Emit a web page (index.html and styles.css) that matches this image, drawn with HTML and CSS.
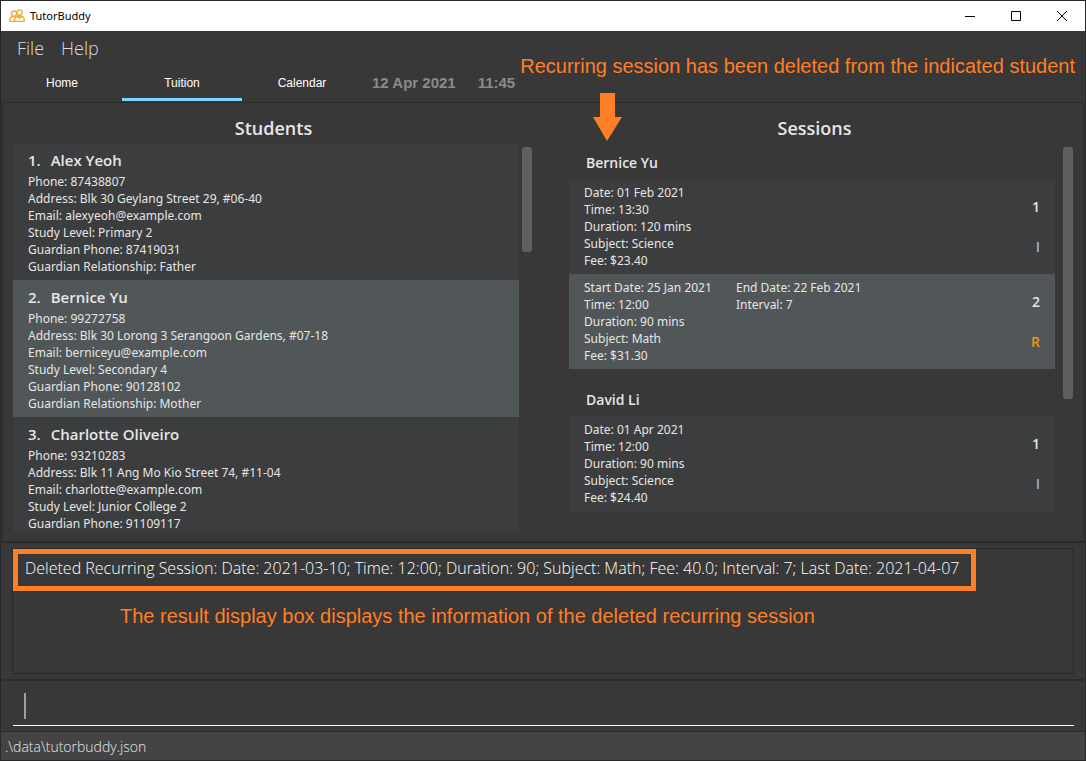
FILE: index.html
```html
<!DOCTYPE html>
<html lang="en">
<head>
<meta charset="utf-8">
<title>TutorBuddy</title>
<link rel="stylesheet" href="styles.css">
</head>
<body>
<div class="window">
  <header class="titlebar">
    <svg class="logo" width="16" height="14" viewBox="0 0 16 14" fill="none" stroke="#eeaa2c" stroke-width="1.3" aria-hidden="true">
      <circle cx="5" cy="4.6" r="2.6"/>
      <circle cx="10.5" cy="3.6" r="2.8"/>
      <path d="M6.2 12.3H1V10.4C1 8.6 2.4 7.6 4.6 7.4"/>
      <path d="M5.6 12.3V10.4C5.6 8.2 7.4 7 10.4 7S15.2 8.2 15.2 10.4V12.3Z"/>
      <path d="M8.2 7.4l2.2 2 2.2-2"/>
    </svg>
    <h1 class="app-name">TutorBuddy</h1>
    <div class="window-buttons">
      <button class="window-button" aria-label="Minimize"><svg width="10" height="11" viewBox="0 0 10 11" stroke="#000"><path d="M0 5.5h10"/></svg></button>
      <button class="window-button" aria-label="Maximize"><svg width="10" height="10" viewBox="0 0 10 10" stroke="#000" fill="none"><path d="M.5.5h9v9h-9z"/></svg></button>
      <button class="window-button" aria-label="Close"><svg width="10" height="10" viewBox="0 0 10 10" stroke="#000"><path d="M0 0l10 10M10 0L0 10"/></svg></button>
    </div>
  </header>

  <nav class="menubar">
    <button class="menu">File</button>
    <button class="menu">Help</button>
  </nav>

  <div class="tabs">
    <button class="tab">Home</button>
    <button class="tab tab-selected">Tuition</button>
    <button class="tab">Calendar</button>
    <span class="clock">12 Apr 2021</span>
    <span class="clock">11:45</span>
  </div>

  <main class="panes">
    <section class="pane">
      <h2 class="pane-title">Students</h2>
      <div class="scroller">
        <div class="list student-list">
          <article class="student">
            <h3 class="name"><span>1.</span><span>Alex Yeoh</span></h3>
            <p>Phone: 87438807</p>
            <p>Address: Blk 30 Geylang Street 29, #06-40</p>
            <p>Email: alexyeoh@example.com</p>
            <p>Study Level: Primary 2</p>
            <p>Guardian Phone: 87419031</p>
            <p>Guardian Relationship: Father</p>
          </article>
          <article class="student selected">
            <h3 class="name"><span>2.</span><span>Bernice Yu</span></h3>
            <p>Phone: 99272758</p>
            <p>Address: Blk 30 Lorong 3 Serangoon Gardens, #07-18</p>
            <p>Email: berniceyu@example.com</p>
            <p>Study Level: Secondary 4</p>
            <p>Guardian Phone: 90128102</p>
            <p>Guardian Relationship: Mother</p>
          </article>
          <article class="student">
            <h3 class="name"><span>3.</span><span>Charlotte Oliveiro</span></h3>
            <p>Phone: 93210283</p>
            <p>Address: Blk 11 Ang Mo Kio Street 74, #11-04</p>
            <p>Email: charlotte@example.com</p>
            <p>Study Level: Junior College 2</p>
            <p>Guardian Phone: 91109117</p>
          </article>
        </div>
        <div class="track"><div class="thumb thumb-students"></div></div>
      </div>
    </section>

    <section class="pane">
      <h2 class="pane-title">Sessions</h2>
      <div class="scroller">
        <div class="list session-list">
          <div class="group">
            <h3 class="group-name">Bernice Yu</h3>
            <article class="session">
              <div class="details">
                <p>Date: 01 Feb 2021</p>
                <p>Time: 13:30</p>
                <p>Duration: 120 mins</p>
                <p>Subject: Science</p>
                <p>Fee: $23.40</p>
              </div>
              <div class="marks"><span>1</span><span class="individual">I</span></div>
            </article>
            <article class="session selected">
              <div class="details">
                <p>Start Date: 25 Jan 2021</p>
                <p>Time: 12:00</p>
                <p>Duration: 90 mins</p>
                <p>Subject: Math</p>
                <p>Fee: $31.30</p>
              </div>
              <div class="details">
                <p>End Date: 22 Feb 2021</p>
                <p>Interval: 7</p>
              </div>
              <div class="marks"><span>2</span><span class="recurring">R</span></div>
            </article>
          </div>
          <div class="group">
            <h3 class="group-name">David Li</h3>
            <article class="session">
              <div class="details">
                <p>Date: 01 Apr 2021</p>
                <p>Time: 12:00</p>
                <p>Duration: 90 mins</p>
                <p>Subject: Science</p>
                <p>Fee: $24.40</p>
              </div>
              <div class="marks"><span>1</span><span class="individual">I</span></div>
            </article>
          </div>
        </div>
        <div class="track"><div class="thumb thumb-sessions"></div></div>
      </div>
    </section>
  </main>

  <section class="result">
    <div class="result-box">
      <p class="result-text">Deleted Recurring Session: Date: 2021-03-10; Time: 12:00; Duration: 90; Subject: Math; Fee: 40.0; Interval: 7; Last Date: 2021-04-07</p>
      <p class="note note-result">The result display box displays the information of the deleted recurring session</p>
    </div>
  </section>

  <div class="command">
    <div class="command-field">
      <input class="command-input" type="text" aria-label="Command">
      <span class="caret"></span>
    </div>
  </div>

  <footer class="status">.\data\tutorbuddy.json</footer>

  <p class="note note-session">Recurring session has been deleted from the indicated student</p>
  <svg class="arrow" width="30" height="48" viewBox="0 0 30 48" fill="#ff7f27" aria-hidden="true"><path d="M8 0h15v24h7L15 48 1 24h7z"/></svg>
</div>
</body>
</html>
```
FILE: styles.css
```css
* { box-sizing: border-box; }

body {
  margin: 0;
  background: #28272c;
  color: #e6e6e6;
  font-family: "Noto Sans", "Open Sans", sans-serif;
  font-size: 12px;
  line-height: 17px;
}

h1, h2, h3, p { margin: 0; }

button {
  border: 0;
  padding: 0;
  background: none;
  color: inherit;
  font: inherit;
}

.window {
  position: relative;
  display: flex;
  flex-direction: column;
  height: 100vh;
  min-height: 700px;
  border: 1px solid #28272c;
  background: #383838;
}

.titlebar {
  display: flex;
  align-items: center;
  height: 30px;
  padding-left: 8px;
  background: #fff;
  color: #000;
}

.app-name {
  margin-left: 5px;
  font-size: 11px;
  font-weight: 400;
  line-height: 16px;
}

.window-buttons {
  display: flex;
  margin-left: auto;
}

.window-button {
  display: grid;
  place-items: center;
  width: 46px;
  height: 30px;
}

.menubar {
  display: flex;
  gap: 17px;
  height: 36px;
  padding: 0 16px 2px;
}

.menu {
  font-family: "Open Sans", sans-serif;
  font-size: 18px;
  font-weight: 300;
  color: #dcdcdc;
}

.tabs {
  display: flex;
  height: 34px;
  padding-left: 1px;
  font-family: "Liberation Sans", Arial, sans-serif;
}

.tab {
  width: 120px;
  height: 34px;
  border-top: 1px solid transparent;
  border-bottom: 3px solid transparent;
  color: #fff;
}

.tab-selected { border-bottom-color: #7fd4ff; }

.clock {
  margin-left: 10px;
  font-size: 15px;
  font-weight: 700;
  line-height: 32px;
  color: #8b8b8b;
}

.clock + .clock { margin-left: 22px; }

.panes {
  flex: 1;
  display: grid;
  grid-template-columns: 1fr 1fr;
  gap: 20px;
  min-height: 0;
  margin: 1px 1px 0;
  padding: 9px 8px 10px 10px;
  border: 1px solid #2b2b2b;
  border-bottom-width: 2px;
}

.pane {
  display: flex;
  flex-direction: column;
  min-height: 0;
}

.pane-title {
  height: 31px;
  font-family: "Open Sans", sans-serif;
  font-size: 18px;
  font-weight: 600;
  line-height: 32px;
  text-align: center;
}

.scroller {
  flex: 1;
  display: flex;
  min-height: 0;
}

.list {
  flex: 1;
  min-width: 0;
  overflow: hidden;
}

.student-list { background: #3c3d3f; }

.student { padding: 5px 15px; }

.selected, .session.selected { background: #515658; }

.name {
  display: flex;
  gap: 10px;
  font-family: "Open Sans", sans-serif;
  font-size: 15px;
  font-weight: 600;
  line-height: 25px;
}

.track {
  padding: 4px 2px 0 3px;
}

.thumb {
  width: 10px;
  border-radius: 3px;
  background: #5f5f5f;
}

.thumb-students { height: 105px; }
.thumb-sessions { height: 252px; }

.session-list { padding: 4px 5px 0 15px; }

.group { margin-bottom: 15px; }

.group-name {
  padding-left: 17px;
  font-family: "Open Sans", sans-serif;
  font-size: 14px;
  font-weight: 600;
  line-height: 32px;
}

.session {
  display: flex;
  padding: 5px 15px;
  background: #3c3d3f;
}

.details { min-width: 152px; }

.marks {
  display: flex;
  flex-direction: column;
  justify-content: center;
  margin-left: auto;
  font-family: "Open Sans", sans-serif;
  font-size: 14px;
  font-weight: 600;
  line-height: 40px;
  text-align: right;
}

.individual { color: #8fb9c8; }
.recurring { color: #eb9b0e; }

.result {
  height: 138px;
  margin: 0 1px;
  padding: 5px 10px;
  border-bottom: 2px solid #2b2b2b;
}

.result-box {
  height: 126px;
  border: 1px solid #2b2b2b;
}

.result-text {
  width: fit-content;
  padding: 0 12px 4px 7px;
  border: 5px solid #ff7f27;
  font-family: "Open Sans", sans-serif;
  font-size: 16px;
  font-weight: 300;
  line-height: 28px;
  color: #fff;
  white-space: nowrap;
}

.note {
  font-family: "Liberation Sans", Arial, sans-serif;
  font-size: 20px;
  line-height: 26px;
  color: #ff7f27;
  white-space: nowrap;
}

.note-result { margin: 12px 0 0 107px; }

.note-session {
  position: absolute;
  top: 52px;
  right: 10px;
}

.arrow {
  position: absolute;
  top: 92px;
  left: 591px;
}

.command {
  height: 50px;
  padding: 0 11px 0 12px;
}

.command-field {
  position: relative;
  height: 45px;
  border-bottom: 1px solid #fff;
}

.command-input {
  width: 100%;
  height: 44px;
  padding: 0 12px;
  border: 0;
  outline: 0;
  background: transparent;
  color: #fff;
  font: inherit;
  font-size: 16px;
}

.caret {
  position: absolute;
  top: 12px;
  left: 11px;
  width: 2px;
  height: 26px;
  background: #a0a0a0;
}

.status {
  height: 29px;
  padding-left: 4px;
  border-top: 1px solid #2b2b2b;
  background: #444;
  font-family: "Open Sans", sans-serif;
  font-size: 14px;
  font-weight: 300;
  line-height: 29px;
}
```
